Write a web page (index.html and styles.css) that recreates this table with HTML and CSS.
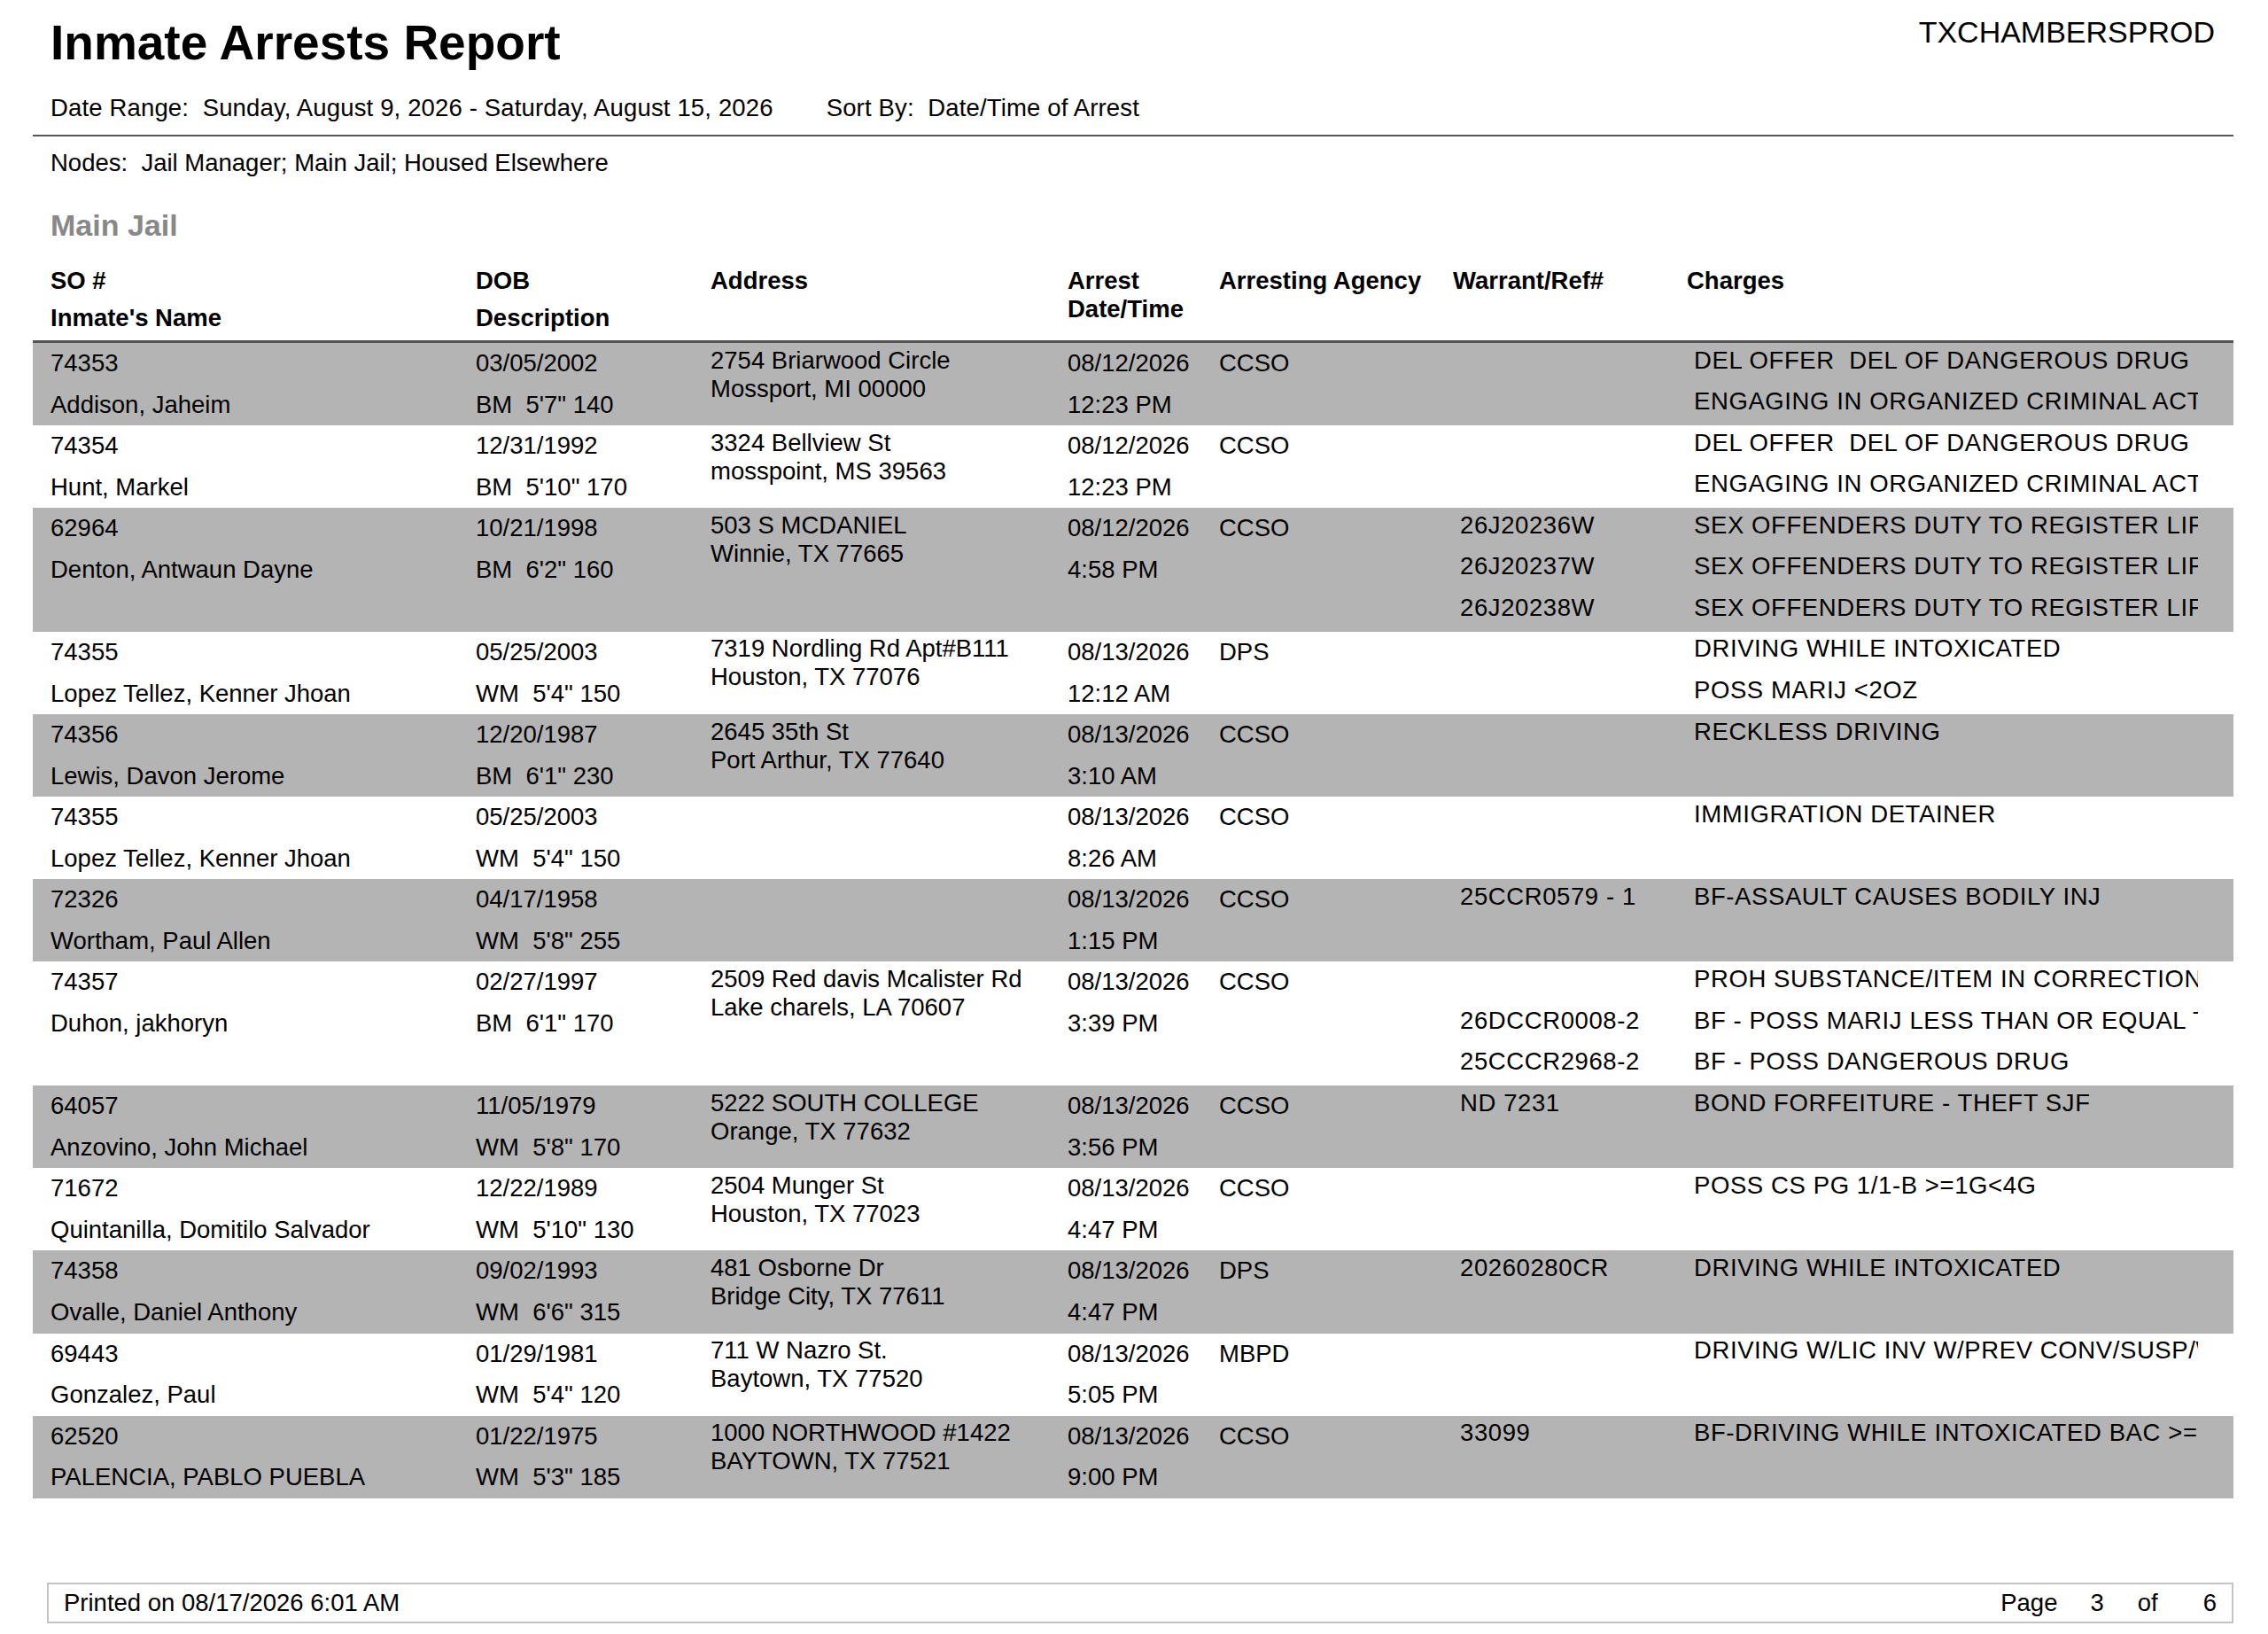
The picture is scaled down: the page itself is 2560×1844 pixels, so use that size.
FILE: index.html
```html
<!DOCTYPE html>
<html lang="en">
<head>
<meta charset="utf-8">
<title>Inmate Arrests Report</title>
<link rel="stylesheet" href="styles.css">
</head>
<body>
<div class="page">
  <header class="report-head">
    <h1 class="title">Inmate Arrests Report</h1>
    <div class="instance">TXCHAMBERSPROD</div>
  </header>
  <div class="params">
    <span class="param">Date Range:&nbsp; Sunday, August 9, 2026 - Saturday, August 15, 2026</span>
    <span class="param sort">Sort By:&nbsp; Date/Time of Arrest</span>
  </div>
  <div class="nodes">Nodes:&nbsp; Jail Manager; Main Jail; Housed Elsewhere</div>
  <h2 class="section">Main Jail</h2>

  <div class="table">
    <div class="thead">
      <div class="th">SO #<br>Inmate's Name</div>
      <div class="th">DOB<br>Description</div>
      <div class="th">Address</div>
      <div class="th th-tight">Arrest<br>Date/Time</div>
      <div class="th">Arresting Agency</div>
      <div class="th">Warrant/Ref#</div>
      <div class="th">Charges</div>
    </div>

    <div class="row shaded">
      <div class="cell">74353<br>Addison, Jaheim</div>
      <div class="cell">03/05/2002<br>BM&nbsp; 5'7&quot; 140</div>
      <div class="cell addr">2754 Briarwood Circle<br>Mossport, MI 00000</div>
      <div class="cell">08/12/2026<br>12:23 PM</div>
      <div class="cell">CCSO</div>
      <div class="charges">
        <div class="charge"><span class="ref"></span><span class="chg">DEL OFFER&nbsp; DEL OF DANGEROUS DRUG</span></div>
        <div class="charge"><span class="ref"></span><span class="chg">ENGAGING IN ORGANIZED CRIMINAL ACTIVITY</span></div>
      </div>
    </div>

    <div class="row">
      <div class="cell">74354<br>Hunt, Markel</div>
      <div class="cell">12/31/1992<br>BM&nbsp; 5'10&quot; 170</div>
      <div class="cell addr">3324 Bellview St<br>mosspoint, MS 39563</div>
      <div class="cell">08/12/2026<br>12:23 PM</div>
      <div class="cell">CCSO</div>
      <div class="charges">
        <div class="charge"><span class="ref"></span><span class="chg">DEL OFFER&nbsp; DEL OF DANGEROUS DRUG</span></div>
        <div class="charge"><span class="ref"></span><span class="chg">ENGAGING IN ORGANIZED CRIMINAL ACTIVITY</span></div>
      </div>
    </div>

    <div class="row shaded">
      <div class="cell">62964<br>Denton, Antwaun Dayne</div>
      <div class="cell">10/21/1998<br>BM&nbsp; 6'2&quot; 160</div>
      <div class="cell addr">503 S MCDANIEL<br>Winnie, TX 77665</div>
      <div class="cell">08/12/2026<br>4:58 PM</div>
      <div class="cell">CCSO</div>
      <div class="charges">
        <div class="charge"><span class="ref">26J20236W</span><span class="chg">SEX OFFENDERS DUTY TO REGISTER LIFE/ANNUALLY</span></div>
        <div class="charge"><span class="ref">26J20237W</span><span class="chg">SEX OFFENDERS DUTY TO REGISTER LIFE/ANNUALLY</span></div>
        <div class="charge"><span class="ref">26J20238W</span><span class="chg">SEX OFFENDERS DUTY TO REGISTER LIFE/ANNUALLY</span></div>
      </div>
    </div>

    <div class="row">
      <div class="cell">74355<br>Lopez Tellez, Kenner Jhoan</div>
      <div class="cell">05/25/2003<br>WM&nbsp; 5'4&quot; 150</div>
      <div class="cell addr">7319 Nordling Rd Apt#B111<br>Houston, TX 77076</div>
      <div class="cell">08/13/2026<br>12:12 AM</div>
      <div class="cell">DPS</div>
      <div class="charges">
        <div class="charge"><span class="ref"></span><span class="chg">DRIVING WHILE INTOXICATED</span></div>
        <div class="charge"><span class="ref"></span><span class="chg">POSS MARIJ &lt;2OZ</span></div>
      </div>
    </div>

    <div class="row shaded">
      <div class="cell">74356<br>Lewis, Davon Jerome</div>
      <div class="cell">12/20/1987<br>BM&nbsp; 6'1&quot; 230</div>
      <div class="cell addr">2645 35th St<br>Port Arthur, TX 77640</div>
      <div class="cell">08/13/2026<br>3:10 AM</div>
      <div class="cell">CCSO</div>
      <div class="charges">
        <div class="charge"><span class="ref"></span><span class="chg">RECKLESS DRIVING</span></div>
      </div>
    </div>

    <div class="row">
      <div class="cell">74355<br>Lopez Tellez, Kenner Jhoan</div>
      <div class="cell">05/25/2003<br>WM&nbsp; 5'4&quot; 150</div>
      <div class="cell addr"></div>
      <div class="cell">08/13/2026<br>8:26 AM</div>
      <div class="cell">CCSO</div>
      <div class="charges">
        <div class="charge"><span class="ref"></span><span class="chg">IMMIGRATION DETAINER</span></div>
      </div>
    </div>

    <div class="row shaded">
      <div class="cell">72326<br>Wortham, Paul Allen</div>
      <div class="cell">04/17/1958<br>WM&nbsp; 5'8&quot; 255</div>
      <div class="cell addr"></div>
      <div class="cell">08/13/2026<br>1:15 PM</div>
      <div class="cell">CCSO</div>
      <div class="charges">
        <div class="charge"><span class="ref">25CCR0579 - 1</span><span class="chg">BF-ASSAULT CAUSES BODILY INJ</span></div>
      </div>
    </div>

    <div class="row">
      <div class="cell">74357<br>Duhon, jakhoryn</div>
      <div class="cell">02/27/1997<br>BM&nbsp; 6'1&quot; 170</div>
      <div class="cell addr">2509 Red davis Mcalister Rd<br>Lake charels, LA 70607</div>
      <div class="cell">08/13/2026<br>3:39 PM</div>
      <div class="cell">CCSO</div>
      <div class="charges">
        <div class="charge"><span class="ref"></span><span class="chg">PROH SUBSTANCE/ITEM IN CORRECTIONAL FACILITY</span></div>
        <div class="charge"><span class="ref">26DCCR0008-2</span><span class="chg">BF - POSS MARIJ LESS THAN OR EQUAL TO 2OZ</span></div>
        <div class="charge"><span class="ref">25CCCR2968-2</span><span class="chg">BF - POSS DANGEROUS DRUG</span></div>
      </div>
    </div>

    <div class="row shaded">
      <div class="cell">64057<br>Anzovino, John Michael</div>
      <div class="cell">11/05/1979<br>WM&nbsp; 5'8&quot; 170</div>
      <div class="cell addr">5222 SOUTH COLLEGE<br>Orange, TX 77632</div>
      <div class="cell">08/13/2026<br>3:56 PM</div>
      <div class="cell">CCSO</div>
      <div class="charges">
        <div class="charge"><span class="ref">ND 7231</span><span class="chg">BOND FORFEITURE - THEFT SJF</span></div>
      </div>
    </div>

    <div class="row">
      <div class="cell">71672<br>Quintanilla, Domitilo Salvador</div>
      <div class="cell">12/22/1989<br>WM&nbsp; 5'10&quot; 130</div>
      <div class="cell addr">2504 Munger St<br>Houston, TX 77023</div>
      <div class="cell">08/13/2026<br>4:47 PM</div>
      <div class="cell">CCSO</div>
      <div class="charges">
        <div class="charge"><span class="ref"></span><span class="chg">POSS CS PG 1/1-B &gt;=1G&lt;4G</span></div>
      </div>
    </div>

    <div class="row shaded">
      <div class="cell">74358<br>Ovalle, Daniel Anthony</div>
      <div class="cell">09/02/1993<br>WM&nbsp; 6'6&quot; 315</div>
      <div class="cell addr">481 Osborne Dr<br>Bridge City, TX 77611</div>
      <div class="cell">08/13/2026<br>4:47 PM</div>
      <div class="cell">DPS</div>
      <div class="charges">
        <div class="charge"><span class="ref">20260280CR</span><span class="chg">DRIVING WHILE INTOXICATED</span></div>
      </div>
    </div>

    <div class="row">
      <div class="cell">69443<br>Gonzalez, Paul</div>
      <div class="cell">01/29/1981<br>WM&nbsp; 5'4&quot; 120</div>
      <div class="cell addr">711 W Nazro St.<br>Baytown, TX 77520</div>
      <div class="cell">08/13/2026<br>5:05 PM</div>
      <div class="cell">MBPD</div>
      <div class="charges">
        <div class="charge"><span class="ref"></span><span class="chg">DRIVING W/LIC INV W/PREV CONV/SUSP/W/O INS</span></div>
      </div>
    </div>

    <div class="row shaded">
      <div class="cell">62520<br>PALENCIA, PABLO PUEBLA</div>
      <div class="cell">01/22/1975<br>WM&nbsp; 5'3&quot; 185</div>
      <div class="cell addr">1000 NORTHWOOD #1422<br>BAYTOWN, TX 77521</div>
      <div class="cell">08/13/2026<br>9:00 PM</div>
      <div class="cell">CCSO</div>
      <div class="charges">
        <div class="charge"><span class="ref">33099</span><span class="chg">BF-DRIVING WHILE INTOXICATED BAC &gt;=0.15</span></div>
      </div>
    </div>
  </div>

  <footer class="footer">
    <span class="printed">Printed on 08/17/2026 6:01 AM</span>
    <span class="pager">
      <span class="pg-label">Page</span>
      <span class="pg-num">3</span>
      <span class="pg-of">of</span>
      <span class="pg-total">6</span>
    </span>
  </footer>
</div>
</body>
</html>
```

FILE: styles.css
```css
* {
  box-sizing: border-box;
}

html,
body {
  margin: 0;
  padding: 0;
  background: #ffffff;
}

body {
  font-family: "Liberation Sans", Arial, "Helvetica Neue", sans-serif;
  font-size: 27.5px;
  color: #000000;
}

.page {
  width: 2560px;
  padding: 18px 39px 0 37px;
}

/* ---------- report heading ---------- */
.report-head {
  display: flex;
  justify-content: space-between;
  align-items: flex-start;
  padding: 0 21px 0 20px;
}

.title {
  margin: 0;
  font-size: 55px;
  font-weight: bold;
  line-height: 60px;
}

.instance {
  font-size: 34px;
  line-height: 40px;
  margin-top: -2px;
}

.params {
  display: flex;
  margin-top: 27.5px;
  padding: 0 0 14.5px 20px;
  line-height: 32px;
  letter-spacing: 0.15px;
  border-bottom: 2px solid #555555;
}

.sort {
  margin-left: 60px;
}

.nodes {
  margin-top: 13.5px;
  padding-left: 20px;
  line-height: 32px;
}

.section {
  margin: 34.5px 0 0 0;
  padding-left: 20px;
  font-size: 34px;
  line-height: 40px;
  font-weight: bold;
  color: #888888;
}

/* ---------- table ---------- */
.table {
  margin-top: 21.5px;
}

.thead,
.row {
  display: grid;
  grid-template-columns: 480px 265px 403px 171px 264px 264px 617px;
  padding-left: 20px;
}

.thead {
  padding-bottom: 4.5px;
  border-bottom: 3px solid #555555;
}

.th {
  font-weight: bold;
  line-height: 42px;
  white-space: nowrap;
}

.th-tight {
  line-height: 32px;
  padding-top: 5px;
}

.row.shaded {
  background: #b4b4b4;
}

.cell {
  line-height: 46.57px;
  white-space: nowrap;
  min-height: 93.14px;
}

.cell.addr {
  line-height: 32px;
  padding-top: 3.5px;
}

.charges {
  grid-column: 6 / 8;
  margin-top: -3.5px;
  padding-bottom: 3.5px;
}

.charge {
  display: grid;
  grid-template-columns: 264px 617px;
  height: 46.57px;
  line-height: 46.57px;
}

.ref {
  padding-left: 8px;
  white-space: nowrap;
  letter-spacing: 0.6px;
}

.chg {
  padding-left: 8px;
  margin-right: 40px;
  overflow: hidden;
  white-space: nowrap;
  letter-spacing: 0.6px;
}

/* ---------- footer ---------- */
.footer {
  display: flex;
  justify-content: space-between;
  align-items: center;
  margin: 95px 0 0 16px;
  height: 46px;
  padding: 0 17px;
  line-height: 42px;
  border: 2px solid #c4c4c4;
}

.pager {
  display: flex;
}

.pg-num {
  margin-left: 37px;
}

.pg-of {
  margin-left: 38px;
}

.pg-total {
  margin-left: 51px;
}
```
